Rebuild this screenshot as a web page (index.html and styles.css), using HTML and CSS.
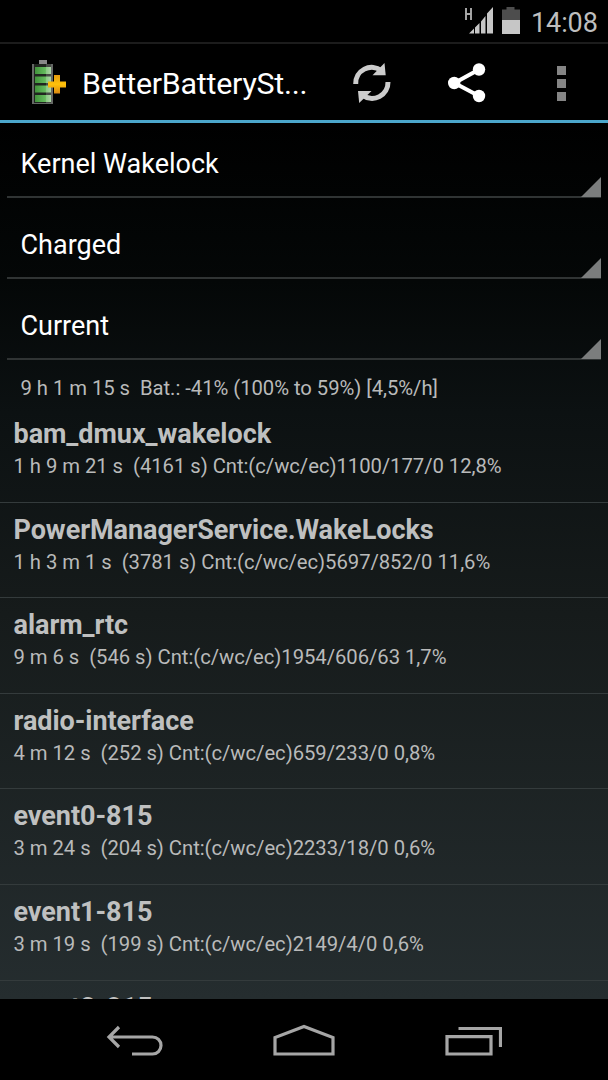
FILE: index.html
```html
<!DOCTYPE html>
<html lang="en">
<head>
    <meta charset="UTF-8">
    <meta name="viewport" content="width=device-width, initial-scale=1.0">
    <title>BetterBatteryStats</title>
    <link rel="stylesheet" href="styles.css">
</head>
<body>
<div class="status">
    <svg class="signal" width="30" height="32" viewBox="0 0 30 32">
        <path d="M2 6v12M7 6v12M2 12h5" fill="none" stroke="#aaa" stroke-width="1.9"/>
        <path d="M5 31.500L10 26.500v5zM11 25.500L15.500 21v10.500H11zM17 19.500L21.500 14v17.500H17zM23 11.500L29 5v26.500h-6z" fill="#c6c6c6"/>
    </svg>
    <svg class="battery" width="18" height="27" viewBox="0 0 18 27">
        <path d="M0 2.500h4.500V0h8v2.500H18V13H0z" fill="#4d4d4d"/>
        <path d="M0 13h18v14H0z" fill="#c6c6c6"/>
    </svg>
    <span class="clock">14:08</span>
</div>
<div class="bar">
    <svg class="logo" width="36" height="46" viewBox="0 0 36 46">
        <defs>
            <linearGradient id="cell" x2="1" y2="0">
                <stop offset="0" stop-color="#42933c"/>
                <stop offset=".6" stop-color="#62b95b"/>
                <stop offset="1" stop-color="#9bcb91"/>
            </linearGradient>
            <linearGradient id="plus" x2="0" y2="1">
                <stop offset="0" stop-color="#e59a0e"/>
                <stop offset=".5" stop-color="#ffc20a"/>
                <stop offset="1" stop-color="#d98712"/>
            </linearGradient>
        </defs>
        <path d="M8 0h8v4H8z" fill="#888"/>
        <path d="M1 4h21v40H1z" fill="#656865"/>
        <path d="M3 4h17v39H3z" fill="#20251f"/>
        <path d="M4 7h16v7H4zM4 16.500h16v6.500H4zM4 25.500h16v7H4zM4 35h16v7H4z" fill="url(#cell)"/>
        <path d="M15 4h5v39h-5z" fill="#fff" opacity=".18"/>
        <path d="M23 15h6v6.500h6V27.500h-6v6h-6v-6h-6v-6h6z" fill="url(#plus)"/>
    </svg>
    <h1>BetterBatterySt...</h1>
    <svg class="refresh" width="40" height="42" viewBox="0 0 40 42">
        <path d="M3.700 22A16 16 0 0 1 29.500 8.700" fill="none" stroke="#ccc" stroke-width="5"/>
        <path d="M32.500 1l1.200 12.200H20.500z" fill="#ccc"/>
        <path d="M36 20A16 16 0 0 1 10.500 33.300" fill="none" stroke="#ccc" stroke-width="5"/>
        <path d="M6 29h13.500L7.200 41z" fill="#ccc"/>
    </svg>
    <svg class="share" width="38" height="40" viewBox="0 0 38 40">
        <path d="M31 6.500L6.500 20 31 33" fill="none" stroke="#fff" stroke-width="4"/>
        <circle cx="31" cy="6.500" r="6.200" fill="#fff"/>
        <circle cx="6.200" cy="20" r="6.200" fill="#fff"/>
        <circle cx="31" cy="33" r="6.200" fill="#fff"/>
    </svg>
    <div class="more"><i></i><i></i><i></i></div>
</div>
<div class="content">
    <div class="spinner first"><span>Kernel Wakelock</span></div>
    <div class="spinner"><span>Charged</span></div>
    <div class="spinner"><span>Current</span></div>
    <p class="since">9 h 1 m 15 s  Bat.: -41% (100% to 59%) [4,5%/h]</p>
    <ul>
        <li>
            <h2>bam_dmux_wakelock</h2>
            <p>1 h 9 m 21 s  (4161 s) Cnt:(c/wc/ec)1100/177/0 12,8%</p>
        </li>
        <li>
            <h2>PowerManagerService.WakeLocks</h2>
            <p>1 h 3 m 1 s  (3781 s) Cnt:(c/wc/ec)5697/852/0 11,6%</p>
        </li>
        <li>
            <h2>alarm_rtc</h2>
            <p>9 m 6 s  (546 s) Cnt:(c/wc/ec)1954/606/63 1,7%</p>
        </li>
        <li>
            <h2>radio-interface</h2>
            <p>4 m 12 s  (252 s) Cnt:(c/wc/ec)659/233/0 0,8%</p>
        </li>
        <li>
            <h2>event0-815</h2>
            <p>3 m 24 s  (204 s) Cnt:(c/wc/ec)2233/18/0 0,6%</p>
        </li>
        <li>
            <h2>event1-815</h2>
            <p>3 m 19 s  (199 s) Cnt:(c/wc/ec)2149/4/0 0,6%</p>
        </li>
        <li>
            <h2>event2-815</h2>
        </li>
    </ul>
</div>
<div class="nav">
    <svg width="58" height="34" viewBox="0 0 58 34">
        <path d="M2 13H46.500a8.500 8.500 0 0 1 0 17H26M13 3L3 13l10 10" fill="none" stroke="#a6a6a6" stroke-width="3.200"/>
    </svg>
    <svg width="62" height="34" viewBox="0 0 62 34">
        <path d="M2 30V13.500L31 2.500l29 11V30z" fill="none" stroke="#a6a6a6" stroke-width="3.200"/>
    </svg>
    <svg width="58" height="34" viewBox="0 0 58 34">
        <path d="M3 12.600h44v17.400H3zM14.500 4.500h42v18.500" fill="none" stroke="#a6a6a6" stroke-width="3.200"/>
    </svg>
</div>
</body>
</html>
```
FILE: styles.css
```css
* {
    margin: 0;
    padding: 0;
    box-sizing: border-box;
}

body {
    display: flex;
    flex-direction: column;
    height: 1080px;
    overflow: hidden;
    background: #000;
    font-family: Roboto, sans-serif;
    color: #fff;
}

svg {
    display: block;
    flex: none;
}

.status {
    display: flex;
    align-items: flex-start;
    justify-content: flex-end;
    height: 44px;
    padding: 2px 10px 0 0;
    border-bottom: 2px solid #1c1c1c;
}

.battery {
    margin: 5px 0 0 8px;
}

.clock {
    width: 68px;
    margin-left: 10px;
    padding-left: 1px;
    font-size: 27px;
    line-height: 42px;
    letter-spacing: -.1px;
    color: #bebebe;
    white-space: nowrap;
}

.bar {
    display: flex;
    align-items: center;
    height: 79px;
    padding: 2px 0 0 31px;
    border-bottom: 3px solid #4ba6cb;
}

.logo {
    margin-bottom: 1px;
}

h1 {
    width: 285px;
    padding-left: 15px;
    font-size: 30.4px;
    font-weight: normal;
    letter-spacing: -.25px;
    white-space: nowrap;
}

.share {
    margin-left: 56px;
}

.more {
    display: grid;
    gap: 4px;
    margin-left: 71px;
}

.more i {
    width: 9px;
    height: 9px;
    background: #858585;
}

.content {
    height: 876px;
    overflow: hidden;
    background: linear-gradient(#000, #040707 18%, #0c1112 33%, #161b1b 56%, #252d2f);
}

.spinner {
    position: relative;
    height: 81px;
    margin: 0 7px;
    padding: 30px 0 0 13.5px;
    border-bottom: 2px solid #303434;
    font-size: 27px;
    line-height: 34px;
}

.spinner.first {
    height: 75px;
    padding-top: 24px;
}

.spinner::after {
    content: "";
    position: absolute;
    right: 0;
    bottom: -1px;
    width: 20px;
    height: 20px;
    background: #7b7d7d;
    clip-path: polygon(100% 0, 100% 100%, 0 100%);
}

.since {
    padding: 14px 0 0 20.5px;
}

p {
    font-size: 20.25px;
    line-height: 28px;
    letter-spacing: -.04px;
    color: #b9baba;
    white-space: pre;
}

ul {
    padding-top: 5px;
    list-style: none;
}

li {
    height: 95.6px;
    padding: 9px 0 0 13.5px;
    border-bottom: 1px solid #343b3c;
}

h2 {
    font-size: 27px;
    line-height: 36px;
    letter-spacing: -.05px;
    color: #bfc0c0;
    white-space: nowrap;
}

.nav {
    display: flex;
    justify-content: center;
    gap: 109px;
    height: 81px;
    padding-top: 25px;
}
```
